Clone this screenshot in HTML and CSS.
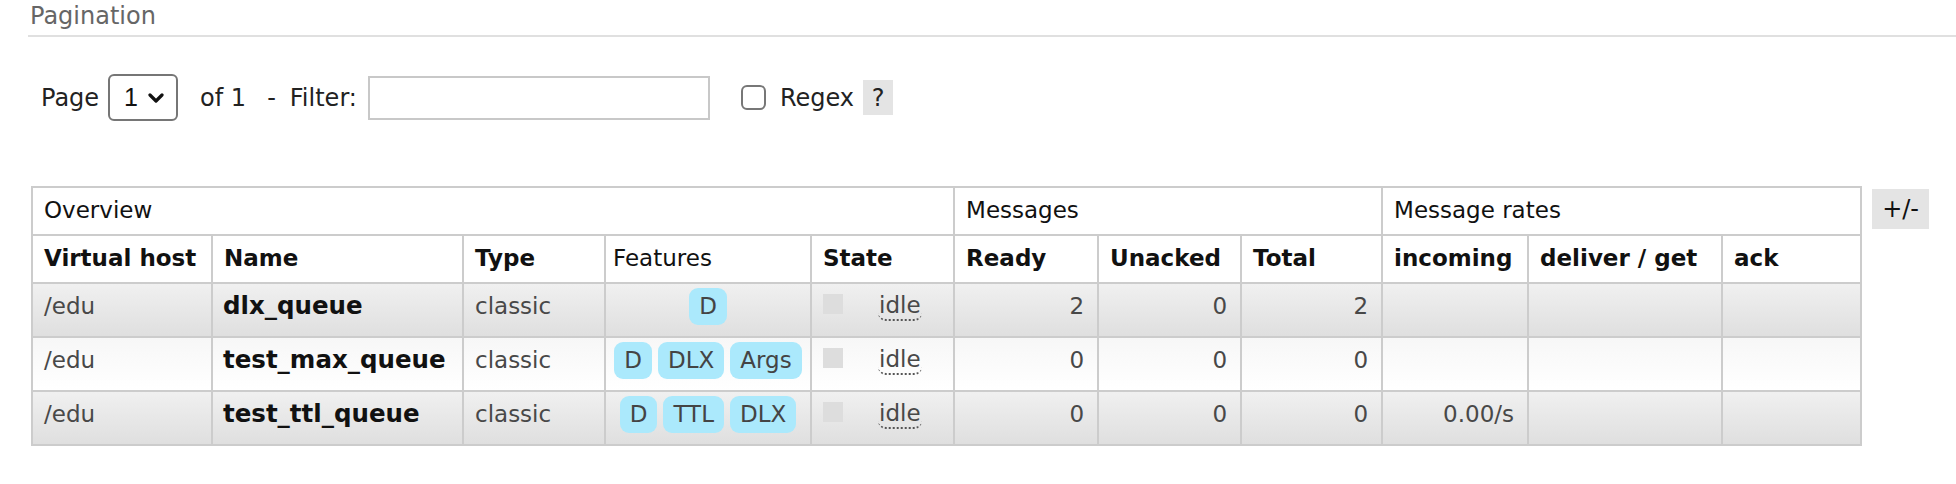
FILE: index.html
```html
<!DOCTYPE html>
<html>
<head>
<meta charset="utf-8">
<link rel="stylesheet" href="styles.css">
</head>
<body>
<div class="section">
  <h3 class="heading">Pagination</h3>
  <div class="pager">
    <span class="lbl">Page</span>
    <div class="select"><span class="sel-val">1</span><svg class="chev" width="16" height="12" viewBox="0 0 16 12"><path d="M2 3 L8 9 L14 3" fill="none" stroke="#111" stroke-width="3.2" stroke-linecap="round" stroke-linejoin="round"/></svg></div>
    <span class="lbl of">of 1</span>
    <span class="lbl filter"><span class="dash">-</span>Filter:</span>
    <div class="input"></div>
    <div class="checkbox"></div>
    <span class="lbl regex">Regex</span>
    <span class="help">?</span>
  </div>

  <div class="table-wrap">
    <table class="list">
      <colgroup>
        <col class="c-vh"><col class="c-name"><col class="c-type"><col class="c-feat"><col class="c-state">
        <col class="c-ready"><col class="c-unack"><col class="c-total">
        <col class="c-in"><col class="c-del"><col class="c-ack">
      </colgroup>
      <thead>
        <tr class="group">
          <th colspan="5">Overview</th>
          <th colspan="3">Messages</th>
          <th colspan="3">Message rates</th>
        </tr>
        <tr class="cols">
          <th>Virtual host</th>
          <th>Name</th>
          <th>Type</th>
          <th class="plain">Features</th>
          <th>State</th>
          <th>Ready</th>
          <th>Unacked</th>
          <th>Total</th>
          <th>incoming</th>
          <th>deliver / get</th>
          <th>ack</th>
        </tr>
      </thead>
      <tbody>
        <tr class="alt1">
          <td>/edu</td>
          <td class="name">dlx_queue</td>
          <td>classic</td>
          <td class="feat"><span class="badge">D</span></td>
          <td><div class="state"><span class="key"></span><span class="idle">idle</span></div></td>
          <td class="num">2</td>
          <td class="num">0</td>
          <td class="num">2</td>
          <td class="num"></td>
          <td class="num"></td>
          <td class="num"></td>
        </tr>
        <tr class="alt2">
          <td>/edu</td>
          <td class="name">test_max_queue</td>
          <td>classic</td>
          <td class="feat"><span class="badge">D</span><span class="badge">DLX</span><span class="badge">Args</span></td>
          <td><div class="state"><span class="key"></span><span class="idle">idle</span></div></td>
          <td class="num">0</td>
          <td class="num">0</td>
          <td class="num">0</td>
          <td class="num"></td>
          <td class="num"></td>
          <td class="num"></td>
        </tr>
        <tr class="alt1">
          <td>/edu</td>
          <td class="name">test_ttl_queue</td>
          <td>classic</td>
          <td class="feat"><span class="badge">D</span><span class="badge">TTL</span><span class="badge">DLX</span></td>
          <td><div class="state"><span class="key"></span><span class="idle">idle</span></div></td>
          <td class="num">0</td>
          <td class="num">0</td>
          <td class="num">0</td>
          <td class="num">0.00/s</td>
          <td class="num"></td>
          <td class="num"></td>
        </tr>
      </tbody>
    </table>
    <span class="plus-minus">+/-</span>
  </div>
</div>
</body>
</html>
```
FILE: styles.css
```css
html, body {
  margin: 0;
  padding: 0;
  background: #fff;
}
body {
  font-family: "DejaVu Sans", Verdana, sans-serif;
  font-size: 23px;
  color: #484848;
}
.section {
  padding-left: 28px;
}
.heading {
  margin: 0;
  font-weight: normal;
  font-size: 24px;
  line-height: 28px;
  color: #666;
  padding: 2px 0 5px 2px;
  border-bottom: 2px solid #e0e0e0;
}
.pager {
  display: flex;
  align-items: center;
  margin-top: 37px;
  padding-left: 13px;
  height: 47px;
  color: #222;
  font-size: 24px;
}
.lbl {
  line-height: 28px;
}
.select {
  margin-left: 9px;
  width: 70px;
  height: 47px;
  box-sizing: border-box;
  border: 2px solid #767676;
  border-radius: 6px;
  display: flex;
  align-items: center;
  padding-left: 14px;
  font-family: "Liberation Sans", Arial, sans-serif;
  font-size: 25px;
  color: #111;
}
.chev {
  margin-left: 10px;
}
.of {
  margin-left: 22px;
}
.filter {
  margin-left: 21px;
}
.dash {
  margin-right: 14px;
}
.input {
  margin-left: 11px;
  width: 342px;
  height: 44px;
  box-sizing: border-box;
  border: 2px solid #c8c8c8;
}
.checkbox {
  margin-left: 31px;
  width: 25px;
  height: 25px;
  box-sizing: border-box;
  border: 2px solid #777;
  border-radius: 6px;
}
.regex {
  margin-left: 14px;
}
.help {
  margin-left: 9px;
  width: 30px;
  height: 35px;
  background: #e4e4e4;
  display: flex;
  align-items: center;
  justify-content: center;
  line-height: 28px;
}
.table-wrap {
  display: flex;
  align-items: flex-start;
  margin-top: 65px;
  margin-left: 3px;
}
table.list {
  border-collapse: collapse;
  table-layout: fixed;
  width: 1829px;
}
.c-vh { width: 180px; }
.c-name { width: 251px; }
.c-type { width: 142px; }
.c-feat { width: 206px; }
.c-state { width: 143px; }
.c-ready { width: 144px; }
.c-unack { width: 143px; }
.c-total { width: 141px; }
.c-in { width: 146px; }
.c-del { width: 194px; }
.c-ack { width: 139px; }
table.list th,
table.list td {
  border: 2px solid #cccccc;
  padding: 9px 10px 10px 11px;
  line-height: 27px;
  text-align: left;
  vertical-align: top;
  white-space: nowrap;
}
table.list th {
  color: #111;
  background: #fff;
}
table.list tr.group th {
  font-weight: normal;
}
table.list tr.cols th {
  font-weight: bold;
}
table.list tr.cols th.plain {
  font-weight: normal;
  padding-left: 7px;
}
table.list td {
  padding: 4px 11px 11px 11px;
  line-height: 37px;
}
table.list tr.alt1 td {
  background: linear-gradient(#f0f0f0, #dfdfdf);
}
table.list tr.alt2 td {
  background: linear-gradient(#f7f7f7, #ffffff);
}
table.list td.name {
  font-weight: bold;
  color: #111;
  font-size: 24.5px;
  line-height: 35px;
  padding-left: 10px;
  padding-bottom: 13px;
}
table.list td.num {
  text-align: right;
  padding-right: 13px;
}
table.list td.feat {
  text-align: center;
  padding-left: 2px;
  padding-right: 2px;
}
.badge {
  display: inline-block;
  background: #abe9fc;
  color: #444;
  border-radius: 9px;
  padding: 5px 10px;
  line-height: 27px;
  margin: 0 4px;
}
.badge + .badge {
  margin-left: 2px;
}
.state {
  display: flex;
  align-items: center;
  height: 37px;
}
.key {
  width: 20px;
  height: 20px;
  background: #dddddd;
  margin-top: -6px;
}
.idle {
  margin-left: 35px;
  line-height: 27px;
  border-bottom: 2px dotted #555;
  border-radius: 0 0 8px 8px;
  padding: 0 1px;
}
.plus-minus {
  margin-left: 10px;
  margin-top: 3px;
  width: 57px;
  height: 40px;
  background: #e4e4e4;
  color: #111;
  display: flex;
  align-items: center;
  justify-content: center;
  line-height: 27px;
  font-size: 24px;
}
```
